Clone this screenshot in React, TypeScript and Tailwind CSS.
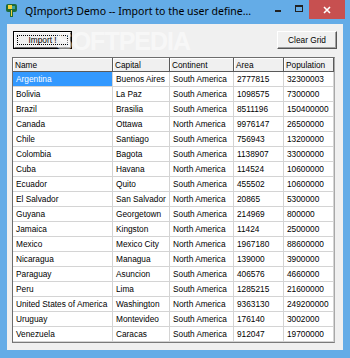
import React from "react";

const rows: string[][] = [
  ["Argentina", "Buenos Aires", "South America", "2777815", "32300003"],
  ["Bolivia", "La Paz", "South America", "1098575", "7300000"],
  ["Brazil", "Brasilia", "South America", "8511196", "150400000"],
  ["Canada", "Ottawa", "North America", "9976147", "26500000"],
  ["Chile", "Santiago", "South America", "756943", "13200000"],
  ["Colombia", "Bagota", "South America", "1138907", "33000000"],
  ["Cuba", "Havana", "North America", "114524", "10600000"],
  ["Ecuador", "Quito", "South America", "455502", "10600000"],
  ["El Salvador", "San Salvador", "North America", "20865", "5300000"],
  ["Guyana", "Georgetown", "South America", "214969", "800000"],
  ["Jamaica", "Kingston", "North America", "11424", "2500000"],
  ["Mexico", "Mexico City", "North America", "1967180", "88600000"],
  ["Nicaragua", "Managua", "North America", "139000", "3900000"],
  ["Paraguay", "Asuncion", "South America", "406576", "4660000"],
  ["Peru", "Lima", "South America", "1285215", "21600000"],
  ["United States of America", "Washington", "North America", "9363130", "249200000"],
  ["Uruguay", "Montevideo", "South America", "176140", "3002000"],
  ["Venezuela", "Caracas", "South America", "912047", "19700000"],
];

const headers = ["Name", "Capital", "Continent", "Area", "Population"];

function AppIcon() {
  return (
    <svg width="11" height="13" viewBox="0 0 11 13">
      <rect x="0" y="0" width="11" height="8" rx="2" fill="#1e6b3a" />
      <rect x="2" y="1" width="4" height="4" fill="#f2d23c" />
      <rect x="6" y="2" width="3" height="3" fill="#3aa0a0" />
      <rect x="4" y="6" width="3" height="7" fill="#1e6b3a" />
      <rect x="5" y="6" width="1" height="6" fill="#f2d23c" />
    </svg>
  );
}

export default function App() {
  return (
    <div className="relative w-[350px] h-[358px] overflow-hidden bg-[#64ace7] flex flex-col">
      {/* Title bar */}
      <div className="h-[24px] flex items-start">
        <div className="ml-[6px] mt-[4px]">
          <AppIcon />
        </div>
        <div
          className="ml-[8px] mt-[3px] text-[10.5px] leading-[16px] text-black whitespace-nowrap"
          style={{ fontFamily: '"Noto Sans", "Open Sans", sans-serif' }}
        >
          QImport3 Demo -- Import to the user define...
        </div>
        <div className="ml-auto flex items-start">
          <div className="w-[20px] h-[19px] flex items-center justify-center">
            <div className="w-[6px] h-[2px] bg-[#222] mt-[3px]" />
          </div>
          <div className="w-[21px] h-[19px] flex items-center justify-center">
            <div className="w-[8px] h-[7px] border border-[#222] border-t-2 mb-[2px]" />
          </div>
          <div className="w-[36px] h-[19px] bg-[#c75050] flex items-center justify-center mr-[5px]">
            <svg width="8" height="8" viewBox="0 0 8 8">
              <path d="M1 1 L7 7 M7 1 L1 7" stroke="#fff" strokeWidth="1.6" />
            </svg>
          </div>
        </div>
      </div>

      {/* Client area */}
      <div
        className="flex-1 mx-[7px] mb-[8px] bg-[#f0f0f0] flex flex-col px-[5px] pt-[7px] text-[8.3px] text-black"
        style={{ fontFamily: '"Liberation Sans", Arial, sans-serif' }}
      >
        <div className="flex justify-between">
          <div className="ml-[1px] w-[59px] h-[18px] border border-black">
            <div className="w-full h-full border border-t-white border-l-white border-r-[#696969] border-b-[#696969] flex items-center justify-center p-[2px]">
              <div className="w-full h-full border border-dotted border-black flex items-center justify-center leading-[10px]">
                Import !
              </div>
            </div>
          </div>
          <div className="mr-[1px] w-[60px] h-[18px] border border-t-white border-l-white border-r-[#555] border-b-[#555] shadow-[inset_-1px_-1px_0_#a0a0a0] flex items-center justify-center leading-[10px]">
            Clear Grid
          </div>
        </div>

        <div className="mt-[8px] w-[323px] border border-t-[#6d6d6d] border-l-[#6d6d6d] border-r-[#a8a8a8] border-b-[#7a7a7a] bg-white">
          <div className="grid grid-cols-[100px_57px_64px_50px_50px]">
            {headers.map((h) => (
              <div
                key={h}
                className="h-[14px] bg-[#f0f0f0] border-r border-b border-[#5a5a5a] shadow-[inset_1px_1px_0_#ffffff] pl-[2px] leading-[14px] whitespace-nowrap overflow-hidden"
              >
                {h}
              </div>
            ))}
            {rows.map((r, ri) =>
              r.map((c, ci) => {
                const sel = ri === 0 && ci === 0;
                return (
                  <div
                    key={ri + "-" + ci}
                    className={
                      "h-[15px] border-r border-b border-[#d4d4d4] pl-[3px] leading-[14px] whitespace-nowrap overflow-hidden " +
                      (sel ? "bg-[#3399ff] text-white" : "")
                    }
                  >
                    {c}
                  </div>
                );
              })
            )}
          </div>
        </div>
      </div>

      {/* Watermark */}
      <div
        className="absolute left-[56px] top-[29px] text-[25px] font-bold tracking-[-1px] text-white opacity-50 leading-none pointer-events-none"
        style={{ fontFamily: '"Liberation Sans", Arial, sans-serif' }}
      >
        SOFTPEDIA
      </div>
    </div>
  );
}
